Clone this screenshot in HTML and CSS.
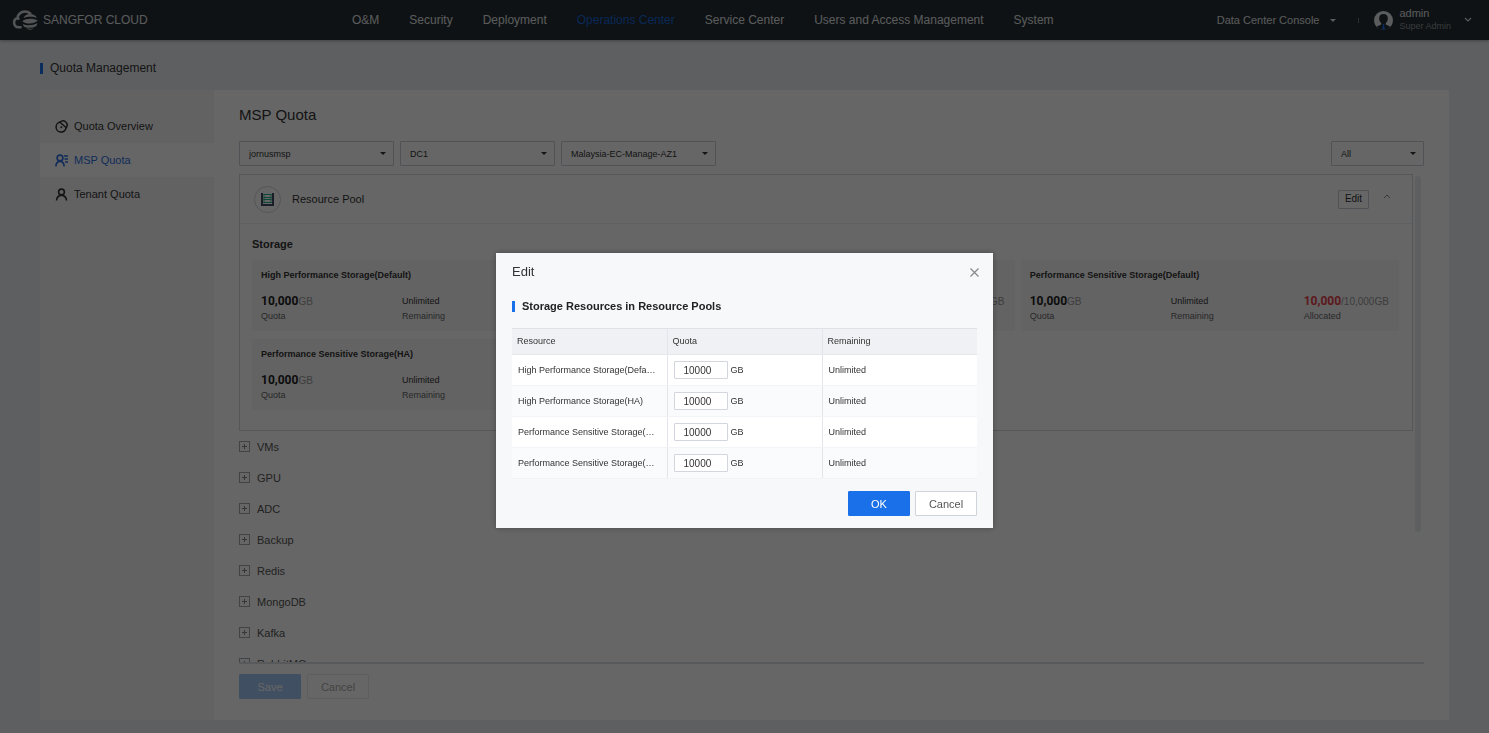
FILE: index.html
```html
<!DOCTYPE html>
<html lang="en">
<head>
<meta charset="utf-8">
<title>Quota Management</title>
<meta name="viewport" content="width=device-width, initial-scale=1">
<link rel="stylesheet" href="styles.css">
</head>
<body>
<div class="app">
  <header class="topbar">
    <div class="brand">
      <svg class="brand-logo" viewBox="0 0 26 20" aria-hidden="true">
        <path d="M8.500 17.300H6.500a4.700 4.700 0 0 1-1-9.200l.9.700M5.500 8C5.500 4.500 9 1.500 13 1.500c2.500 0 4 .8 5.200 2" fill="none" stroke="currentColor" stroke-width="2.600" stroke-linecap="round"/>
        <path d="M11.500 8C13.500 2.800 22.500 2.800 25 8c-3.500-1.600-9.500-1.600-13.500 0z" fill="currentColor"/>
        <path d="M10.300 11.200c4-3 11-3 15.500-.6-3.500 3.600-11.500 4-15.500.6z" fill="currentColor"/>
        <path d="M10.800 14c4 2 10.500 1.600 14.700-1-.3 1.600-1 2.800-1.800 3.600-3.800 1.600-8.500 1.400-11.500.2-.7-.8-1.200-1.700-1.400-2.800z" fill="currentColor"/>
        <path d="M14 18.300c2.500.7 5.500.6 8-.1-2 1.800-5.500 2-8 .1z" fill="currentColor"/>
      </svg>
      <span class="brand-name">SANGFOR CLOUD</span>
    </div>
    <nav class="topnav">
      <a href="#">O&amp;M</a>
      <a href="#">Security</a>
      <a href="#">Deployment</a>
      <a href="#" class="active">Operations Center</a>
      <a href="#">Service Center</a>
      <a href="#">Users and Access Management</a>
      <a href="#">System</a>
    </nav>
    <div class="account">
      <button class="console-switch" type="button">Data Center Console <span class="caret"></span></button>
      <span class="divider"></span>
      <button class="user" type="button">
        <svg class="avatar" viewBox="0 0 19 19" aria-hidden="true">
          <circle cx="9.500" cy="9.500" r="9.500" fill="#e4e6e8"/>
          <path d="M9.500 3c3 0 4.500 2 4.300 4.600 0 2-.9 3.600-2 4.500v1.400l4.700 2.200A9.500 9.500 0 0 1 9.500 19a9.500 9.500 0 0 1-7-3.300l4.700-2.200v-1.400c-1.100-.9-2-2.500-2-4.500C5 5 6.500 3 9.500 3z" fill="#232d32"/>
          <path d="M8.500 13h2l-.5 1.500 1 4.300h-3l1-4.300z" fill="#1a70e8"/>
        </svg>
        <span class="user-text"><span class="user-name">admin</span><span class="user-role">Super Admin</span></span>
        <svg class="chevron" viewBox="0 0 8 6" aria-hidden="true"><path d="M1 1l3 3 3-3" fill="none" stroke="currentColor" stroke-width="1.200"/></svg>
      </button>
    </div>
  </header>

  <div class="page">
    <h1 class="page-title">Quota Management</h1>
    <div class="board">
      <aside class="sidebar">
        <a href="#" class="side-item">
          <svg viewBox="0 0 13 13" aria-hidden="true"><g fill="none" stroke="currentColor" stroke-width="1.500"><path d="M5.500 2.100A5 5 0 1 0 11 8"/><path d="M5 2.200C6.500.8 9 .5 10.700 2c1.700 1.600 1.800 4 .5 5.700z"/></g><circle cx="6.300" cy="7.300" r="1" fill="currentColor"/></svg>
          Quota Overview
        </a>
        <a href="#" class="side-item active">
          <svg viewBox="0 0 13 13" aria-hidden="true"><g fill="none" stroke="currentColor" stroke-width="1.600"><circle cx="5" cy="4" r="2.900"/><path d="M.9 12.500c0-3 1.300-5 4.100-5.400 2.800.4 4.100 2.400 4.100 5.400"/><path d="M9 2h4M9.500 5H13M10 8h3" stroke-width="1.400"/></g></svg>
          MSP Quota
        </a>
        <a href="#" class="side-item">
          <svg viewBox="0 0 13 13" aria-hidden="true"><g fill="none" stroke="currentColor" stroke-width="1.600"><circle cx="6.500" cy="4" r="2.900"/><path d="M1.500 12.500c.2-3 1.800-5 5-5.400 3.200.4 4.800 2.400 5 5.400"/></g></svg>
          Tenant Quota
        </a>
      </aside>

      <main class="content">
        <h2 class="content-title">MSP Quota</h2>
        <div class="filters">
          <span class="picker"><select aria-label="MSP"><option>jornusmsp</option></select></span>
          <span class="picker"><select aria-label="Data center"><option>DC1</option></select></span>
          <span class="picker"><select aria-label="Zone"><option>Malaysia-EC-Manage-AZ1</option></select></span>
          <span class="picker picker-small"><select aria-label="Type"><option>All</option></select></span>
        </div>

        <div class="scroller">
          <div class="scroll-body">
            <section class="panel">
              <div class="panel-head">
                <span class="pool-icon">
                  <svg viewBox="0 0 13 13" aria-hidden="true"><g fill="none" stroke="#1fae84"><path d="M2.500 1.500h8M2.500 4.500h8M2.500 6.500h8M2.500 9.500h8"/><path d="M3 1v9M10 1v9" stroke-width=".8"/></g><path d="M1 0v12h11V0" fill="none" stroke="#414c66" stroke-width="2"/></svg>
                </span>
                <h3 class="panel-title">Resource Pool</h3>
                <button class="mini-btn" type="button">Edit</button>
                <svg class="fold" viewBox="0 0 8 5" aria-hidden="true"><path d="M1 4l3-3 3 3" fill="none" stroke="currentColor"/></svg>
              </div>
              <div class="panel-body">
                <h4 class="group-title">Storage</h4>
                <div class="quota-grid">
                  <article class="quota">
                    <h5>High Performance Storage(Default)</h5>
                    <div class="stats">
                      <div><p class="value"><b>10,000</b><span>GB</span></p><p class="label">Quota</p></div>
                      <div><p class="value plain">Unlimited</p><p class="label">Remaining</p></div>
                      <div><p class="value"><b class="over">10,000</b><span>/10,000GB</span></p><p class="label">Allocated</p></div>
                    </div>
                  </article>
                  <article class="quota">
                    <h5>High Performance Storage(HA)</h5>
                    <div class="stats">
                      <div><p class="value"><b>10,000</b><span>GB</span></p><p class="label">Quota</p></div>
                      <div><p class="value plain">Unlimited</p><p class="label">Remaining</p></div>
                      <div><p class="value"><b class="over">10,000</b><span>/10,000GB</span></p><p class="label">Allocated</p></div>
                    </div>
                  </article>
                  <article class="quota">
                    <h5>Performance Sensitive Storage(Default)</h5>
                    <div class="stats">
                      <div><p class="value"><b>10,000</b><span>GB</span></p><p class="label">Quota</p></div>
                      <div><p class="value plain">Unlimited</p><p class="label">Remaining</p></div>
                      <div><p class="value"><b class="over">10,000</b><span>/10,000GB</span></p><p class="label">Allocated</p></div>
                    </div>
                  </article>
                  <article class="quota">
                    <h5>Performance Sensitive Storage(HA)</h5>
                    <div class="stats">
                      <div><p class="value"><b>10,000</b><span>GB</span></p><p class="label">Quota</p></div>
                      <div><p class="value plain">Unlimited</p><p class="label">Remaining</p></div>
                      <div><p class="value"><b class="over">10,000</b><span>/10,000GB</span></p><p class="label">Allocated</p></div>
                    </div>
                  </article>
                </div>
              </div>
            </section>

            <ul class="services">
              <li><button type="button"><span class="plus"></span>VMs</button></li>
              <li><button type="button"><span class="plus"></span>GPU</button></li>
              <li><button type="button"><span class="plus"></span>ADC</button></li>
              <li><button type="button"><span class="plus"></span>Backup</button></li>
              <li><button type="button"><span class="plus"></span>Redis</button></li>
              <li><button type="button"><span class="plus"></span>MongoDB</button></li>
              <li><button type="button"><span class="plus"></span>Kafka</button></li>
              <li><button type="button"><span class="plus"></span>RabbitMQ</button></li>
            </ul>
          </div>
          <div class="scrollbar"></div>
        </div>

        <div class="actions">
          <button class="btn primary" type="button" disabled>Save</button>
          <button class="btn" type="button" disabled>Cancel</button>
        </div>
      </main>
    </div>
  </div>
</div>

<div class="overlay">
  <div class="dialog" role="dialog" aria-modal="true" aria-labelledby="dialog-title">
    <div class="dialog-head">
      <h2 id="dialog-title">Edit</h2>
      <button class="close" type="button" aria-label="Close"><svg viewBox="0 0 9 9" aria-hidden="true"><path d="M.5.5l8 8M8.500.5l-8 8" fill="none" stroke="currentColor" stroke-width="1.200"/></svg></button>
    </div>
    <h3 class="dialog-section">Storage Resources in Resource Pools</h3>
    <table class="quota-table">
      <thead><tr><th>Resource</th><th>Quota</th><th>Remaining</th></tr></thead>
      <tbody>
        <tr><td>High Performance Storage(Default)</td><td><label><input type="text" value="10000" aria-label="High Performance Storage(Default) quota">GB</label></td><td>Unlimited</td></tr>
        <tr><td>High Performance Storage(HA)</td><td><label><input type="text" value="10000" aria-label="High Performance Storage(HA) quota">GB</label></td><td>Unlimited</td></tr>
        <tr><td>Performance Sensitive Storage(Default)</td><td><label><input type="text" value="10000" aria-label="Performance Sensitive Storage(Default) quota">GB</label></td><td>Unlimited</td></tr>
        <tr><td>Performance Sensitive Storage(HA)</td><td><label><input type="text" value="10000" aria-label="Performance Sensitive Storage(HA) quota">GB</label></td><td>Unlimited</td></tr>
      </tbody>
    </table>
    <div class="dialog-actions">
      <button class="btn primary" type="button">OK</button>
      <button class="btn" type="button">Cancel</button>
    </div>
  </div>
</div>
</body>
</html>
```

FILE: styles.css
```css
* { box-sizing: border-box; margin: 0; padding: 0; }

body {
  font: 11px/16px "Liberation Sans", Arial, sans-serif;
  color: #333;
  background: #ebeef2;
}

a { color: inherit; text-decoration: none; }
button, input, select { font: inherit; color: inherit; }
button { background: none; border: 0; }
ul { list-style: none; }

.app { display: flex; flex-direction: column; height: 100vh; }

/* Top bar */
.topbar {
  display: flex;
  align-items: center;
  height: 40px;
  flex: none;
  padding: 0 17px 0 12px;
  background: #232d32;
  color: #e0e3e5;
  box-shadow: 0 1px 3px rgba(0, 0, 0, .3);
}
.brand { display: flex; align-items: center; gap: 5px; width: 340px; flex: none; }
.brand-logo { width: 26px; height: 20px; color: #cfd2d4; }
.brand-name { font-size: 12px; }
.topnav { display: flex; gap: 30px; font-size: 12px; white-space: nowrap; }
.topnav .active { color: #1a66d6; }
.account { display: flex; align-items: center; margin-left: auto; white-space: nowrap; }
.console-switch { display: flex; align-items: center; gap: 11px; }
.caret {
  border: 3px solid transparent;
  border-top-color: currentColor;
  border-bottom: 0;
}
.divider { width: 1px; height: 5px; margin: 0 15px 0 22px; background: #70777b; }
.user { display: flex; align-items: center; text-align: left; }
.avatar { width: 19px; height: 19px; margin-right: 6px; }
.user-text { display: flex; flex-direction: column; margin-right: 13px; line-height: 13px; }
.user-role { font-size: 9px; color: #8d9498; }
.chevron { width: 8px; height: 6px; }

/* Page frame */
.page {
  display: flex;
  flex-direction: column;
  flex: 1;
  min-height: 0;
  padding: 18px 40px 13px;
}
.page-title, .dialog-section { display: flex; align-items: center; }
.page-title { gap: 7px; margin-bottom: 12px; font-size: 12px; font-weight: 400; line-height: 20px; }
.page-title::before, .dialog-section::before {
  content: "";
  width: 3px;
  height: 11px;
  background: #1a70e8;
}
.board { display: flex; flex: 1; min-height: 0; background: #fff; }

/* Sidebar */
.sidebar { flex: 0 0 174px; padding-top: 19px; background: #f6f6f7; }
.side-item {
  display: flex;
  align-items: center;
  gap: 6px;
  height: 34px;
  padding-left: 15px;
}
.side-item svg { width: 13px; height: 13px; }
.side-item.active { background: #fff; color: #2e6fe0; }

/* Content */
.content { display: flex; flex-direction: column; flex: 1; min-width: 0; padding: 15px 25px 21px; }
.content-title { margin-bottom: 16px; font-size: 15px; font-weight: 400; line-height: 20px; }
.filters { display: flex; gap: 6px; margin-bottom: 8px; }
.picker { position: relative; width: 155px; }
.picker select {
  width: 100%;
  height: 25px;
  padding: 0 20px 0 9px;
  appearance: none;
  font-size: 9px;
  background: #fff;
  border: 1px solid #c9cdd4;
  border-radius: 1px;
}
.picker::after {
  content: "";
  position: absolute;
  top: 11px;
  right: 8px;
  border: 3px solid transparent;
  border-top-color: #333;
  border-bottom: 0;
}
.picker-small { width: 93px; margin-left: auto; }

.scroller { display: flex; gap: 2px; flex: 1; min-height: 0; overflow: hidden; }
.scroll-body { flex: 1; min-width: 0; }
.scrollbar { width: 6px; height: 73%; margin: 2px 3px 0 0; border-radius: 3px; background: #ebeeef; }

.panel { border: 1px solid #d6d9dd; }
.panel-head {
  display: flex;
  align-items: center;
  height: 49px;
  padding: 0 21px 0 14px;
  border-bottom: 1px solid #ebedf0;
}
.pool-icon {
  display: grid;
  place-items: center;
  width: 27px;
  height: 27px;
  border: 1px solid #d3d5e0;
  border-radius: 50%;
}
.pool-icon svg { width: 13px; height: 13px; }
.panel-title { margin-left: 11px; font-size: 11px; font-weight: 400; }
.mini-btn {
  width: 31px;
  height: 19px;
  margin: 0 14px 0 auto;
  font-size: 10px;
  line-height: 16px;
  border: 1px solid #c9cdd4;
  border-radius: 1px;
}
.fold { width: 8px; height: 5px; margin-bottom: 5px; color: #888; }

.panel-body { padding: 12px 13px 20px 12px; }
.group-title { margin-bottom: 8px; font-size: 11px; line-height: 16px; }
.quota-grid { display: grid; grid-template-columns: repeat(3, 1fr); gap: 8px 6px; }
.quota { padding: 7px 9px; background: #f7f7f8; font-size: 9px; }
.quota h5 { margin-bottom: 10px; font-size: 9px; line-height: 16px; }
.stats { display: grid; grid-template-columns: 141px 133px auto; }
.value { height: 16px; line-height: 16px; color: #999; white-space: nowrap; }
.value span { font-size: 10px; }
.value b { font: bold 12px/16px Roboto, "Liberation Sans", sans-serif; color: #222; }
.value .over { color: #e8404a; }
.value.plain { color: #333; }
.label { color: #666; line-height: 15px; }

.services button { display: flex; align-items: center; gap: 7px; height: 31px; color: #555; }
.plus {
  width: 11px;
  height: 11px;
  border: 1px solid #a4a8ad;
  background:
    linear-gradient(#888, #888) center / 5px 1px no-repeat,
    linear-gradient(#888, #888) center / 1px 5px no-repeat;
}

.actions { display: flex; gap: 6px; padding-top: 10px; border-top: 2px solid #dcdfe3; }
.btn {
  width: 62px;
  height: 25px;
  background: #fff;
  border: 1px solid #cfd3da;
  border-radius: 1px;
  color: #555;
}
.btn.primary { background: #1a70e8; border-color: #1a70e8; color: #fff; }
.btn:disabled { background: none; border-color: #ebecee; color: #aaa; }
.btn.primary:disabled { background: #a3c6f6; border-color: #a3c6f6; color: #fff; }

/* Dialog */
.overlay {
  position: fixed;
  inset: 0;
  display: flex;
  align-items: center;
  justify-content: center;
  padding-top: 48px;
  background: rgba(0, 0, 0, .6);
}
.dialog {
  width: 497px;
  max-width: 100%;
  padding: 8px 16px 12px;
  background: #f7f8fa;
  box-shadow: 0 0 6px rgba(0, 0, 0, .3);
}
.dialog-head { display: flex; align-items: center; justify-content: space-between; height: 21px; }
.dialog-head h2 { font-size: 13px; font-weight: 400; }
.close { display: flex; margin: 2px -2px 0 0; color: #888; }
.close svg { width: 9px; height: 9px; }
.dialog-section { gap: 7px; margin: 16px 0 14px; font-size: 11px; color: #222; }

.quota-table { width: 100%; table-layout: fixed; border-collapse: collapse; font-size: 9px; border-top: 1px solid #dfe1e6; }
.quota-table th {
  height: 26px;
  padding: 0 0 2px 5px;
  text-align: left;
  font-weight: 400;
  background: #f0f1f5;
  border-bottom: 1px solid #e6e8ec;
}
.quota-table th + th, .quota-table td + td { border-left: 1px solid #e3e5ea; }
.quota-table td {
  height: 31px;
  padding: 0 8px 0 6px;
  overflow: hidden;
  white-space: nowrap;
  text-overflow: ellipsis;
  background: #fff;
  border-bottom: 1px solid #f3f4f7;
}
.quota-table tr:nth-child(even) td { background: #fafbfd; }
.quota-table label { display: flex; align-items: center; gap: 3px; }
.quota-table input {
  width: 54px;
  height: 18px;
  padding: 0 9px;
  font-size: 10px;
  background: #fff;
  border: 1px solid #d3d6de;
  border-radius: 1px;
}
.dialog-actions { display: flex; justify-content: flex-end; gap: 5px; margin-top: 12px; }
```
